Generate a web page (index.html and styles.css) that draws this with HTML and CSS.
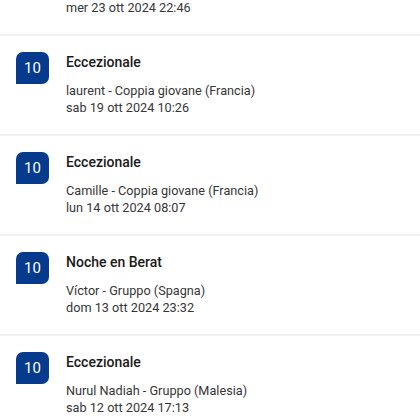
FILE: index.html
```html
<!DOCTYPE html>
<html lang="it">
<head>
<meta charset="utf-8">
<link rel="stylesheet" href="styles.css">
</head>
<body>
<div class="list">
  <div class="item partial">
    <div class="spacer"></div>
    <div class="content">
      <div class="meta">mer 23 ott 2024 22:46</div>
    </div>
  </div>
  <div class="item">
    <div class="badge">10</div>
    <div class="content">
      <div class="title">Eccezionale</div>
      <div class="meta">laurent - Coppia giovane (Francia)</div>
      <div class="meta">sab 19 ott 2024 10:26</div>
    </div>
  </div>
  <div class="item">
    <div class="badge">10</div>
    <div class="content">
      <div class="title">Eccezionale</div>
      <div class="meta">Camille - Coppia giovane (Francia)</div>
      <div class="meta">lun 14 ott 2024 08:07</div>
    </div>
  </div>
  <div class="item">
    <div class="badge">10</div>
    <div class="content">
      <div class="title">Noche en Berat</div>
      <div class="meta">Víctor - Gruppo (Spagna)</div>
      <div class="meta">dom 13 ott 2024 23:32</div>
    </div>
  </div>
  <div class="item">
    <div class="badge">10</div>
    <div class="content">
      <div class="title">Eccezionale</div>
      <div class="meta">Nurul Nadiah - Gruppo (Malesia)</div>
      <div class="meta">sab 12 ott 2024 17:13</div>
    </div>
  </div>
</div>
</body>
</html>
```
FILE: styles.css
```css
html, body {
  margin: 0;
  padding: 0;
  background: #ffffff;
}
body {
  font-family: Roboto, "Noto Sans", sans-serif;
  color: #1a1a1a;
  width: 420px;
  height: 420px;
  overflow: hidden;
}
.list {
  display: flex;
  flex-direction: column;
  margin-top: -1px;
}
.item {
  display: flex;
  gap: 17px;
  padding: 16px 16px 18px 16px;
  border-top: 2px solid #f1f1f1;
}
.item.partial {
  border-top: none;
  padding-top: 0;
}
.spacer {
  width: 33px;
  flex: none;
}
.badge {
  width: 33px;
  height: 32px;
  flex: none;
  background: #053a8c;
  color: #ffffff;
  border-radius: 7px 7px 7px 0;
  display: flex;
  align-items: center;
  justify-content: center;
  font-size: 15px;
}
.content {
  display: flex;
  flex-direction: column;
}
.title {
  font-size: 14px;
  font-weight: 500;
  line-height: 20px;
  color: #1a1a1a;
  margin-bottom: 10px;
}
.meta {
  font-size: 12.7px;
  line-height: 17px;
  color: #363636;
}
```
